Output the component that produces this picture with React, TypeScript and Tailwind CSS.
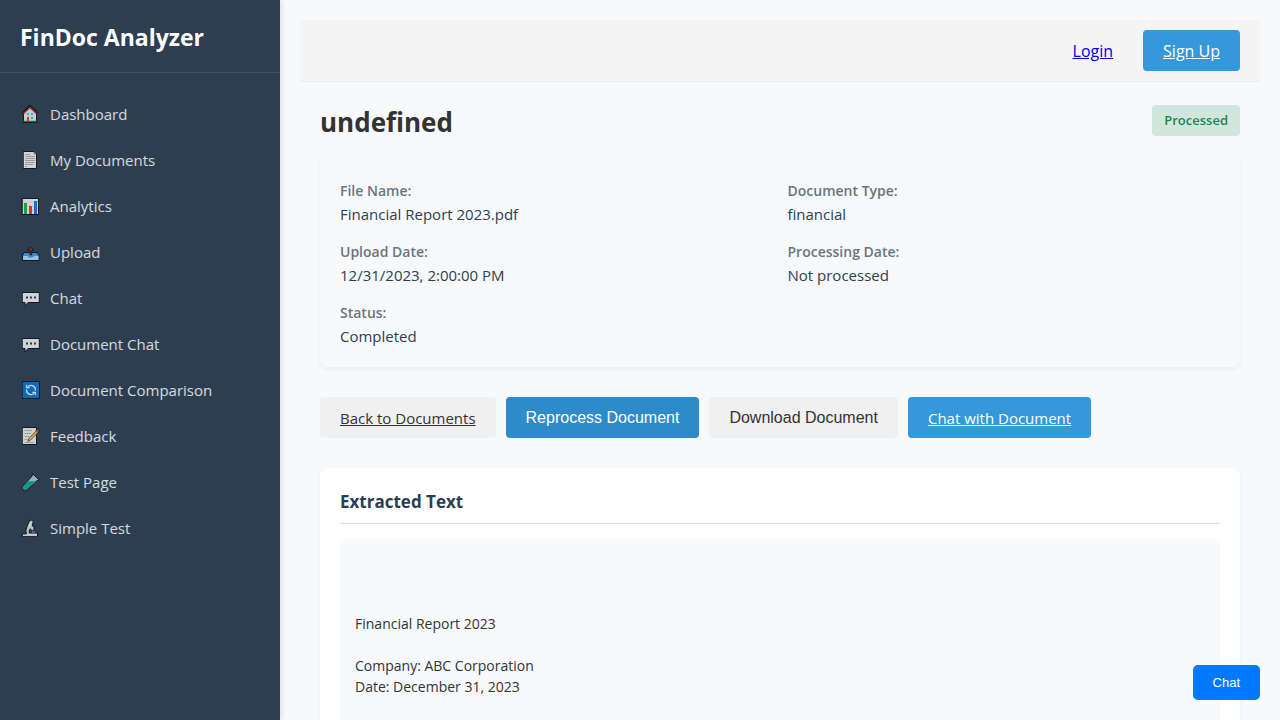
import type { ReactNode } from 'react';

const outline = { stroke: '#101418', strokeWidth: 1, strokeLinejoin: 'round' as const, strokeLinecap: 'round' as const };

function Glyph({ children }: { children: ReactNode }) {
  return (
    <svg viewBox="0 0 20 20" className="h-5 w-5 shrink-0 opacity-90" aria-hidden="true">
      {children}
    </svg>
  );
}

const house = (
  <Glyph>
    <path d="M3.5 9.5V17.5H16.5V9.5L10 3Z" fill="#d9dce0" {...outline} />
    <path d="M2.5 18.2H17.5" stroke="#101418" strokeWidth="1.4" />
    <path d="M3.5 17.2H16.5" stroke="#2fa84a" strokeWidth="1" />
    <path d="M2.5 9.5L10 2.5L17.5 9.5" fill="none" stroke="#101418" strokeWidth="2.4" />
    <path d="M3.4 9.6L10 3.4L16.6 9.6" fill="none" stroke="#d6402e" strokeWidth="1.1" />
    <rect x="7" y="9" width="2" height="2" fill="#35b5e8" />
    <rect x="11" y="9" width="2" height="2" fill="#35b5e8" />
    <rect x="11" y="13" width="2" height="2" fill="#35b5e8" />
    <rect x="7" y="13" width="2" height="4" fill="#d6402e" />
  </Glyph>
);

const page = (
  <Glyph>
    <path d="M3.5 1.5H14L16.5 4V18.5H3.5Z" fill="#e1e3e6" {...outline} />
    <path d="M14 1.8V4H16.2" fill="none" stroke="#767b82" strokeWidth="0.8" />
    <path d="M5.2 4.5H10M5.2 6.5H14.8M5.2 8.5H14.8M5.2 10.5H14.8M5.2 12.5H14.8M5.2 14.5H13M5.2 16.5H7" stroke="#92979d" strokeWidth="0.8" />
  </Glyph>
);

const barChart = (
  <Glyph>
    <rect x="2.5" y="2.5" width="16" height="16" fill="#e4e6e9" {...outline} />
    <path d="M3 6H18M3 10H18M3 14H18" stroke="#c5c8cc" strokeWidth="0.6" />
    <rect x="4" y="7" width="3" height="11" fill="#25a83c" />
    <rect x="9" y="10" width="3" height="8" fill="#dc3c2b" />
    <rect x="14" y="5" width="3" height="13" fill="#1b72c4" />
  </Glyph>
);

const outbox = (
  <Glyph>
    <path d="M4.5 10.5H17L19 13.5V18.5H2.5V13.5Z" fill="#3f94d1" {...outline} />
    <path d="M3 14H7.5Q8 15.7 10.8 15.7Q13.6 15.7 14 14H18.5V18H3Z" fill="#a5d2ef" />
    <path d="M10.8 5.3L14 8.3H11.7V12.8H9.9V8.3H7.6Z" fill="#a8242d" {...outline} strokeWidth={0.9} />
  </Glyph>
);

const speech = (
  <Glyph>
    <path d="M2.5 4.5H19.3V14.5H8L5 18V14.5H2.5Z" fill="#e1e3e6" {...outline} />
    <path d="M6 8.5H8V10.5H6ZM10 8.5H12V10.5H10ZM14 8.5H16V10.5H14Z" fill="#353a40" />
  </Glyph>
);

const refresh = (
  <Glyph>
    <rect x="2.5" y="1.5" width="17" height="17" fill="#0b70c8" {...outline} />
    <path d="M7.7 6.8A4.5 4.5 0 0 1 15.4 10.5M14.3 13.2A4.5 4.5 0 0 1 6.6 9.5" fill="none" stroke="#d7e7f5" strokeWidth="1.2" />
    <path d="M6.6 4.8V7.6H9.6M15.4 15.2V12.4H12.4" fill="none" stroke="#d7e7f5" strokeWidth="1.1" />
  </Glyph>
);

const memo = (
  <Glyph>
    <path d="M2.5 1.5H16.5V18.5H2.5Z" fill="#dfe1e3" {...outline} />
    <path d="M4.5 4.5H12M4.5 7.5H11M4.5 10.5H9M4.5 13.5H7.5M4.5 16.5H14" stroke="#959a9f" strokeWidth="0.8" />
    <path d="M8 15L9 12.2L17.3 3.8L19.2 5.4L10.6 14Z" fill="#f1b83f" {...outline} strokeWidth={0.6} />
    <path d="M16 4.8L17.4 3.3L19.4 5L17.9 6.6Z" fill="#bf4e50" {...outline} strokeWidth={0.5} />
  </Glyph>
);

const testTube = (
  <Glyph>
    <path d="M12.5 1.8L19.2 7.8L17 8.7L7.7 17.3Q5.2 19.4 3.2 17.6Q1.6 15.6 3.5 13.4L12 4.2Z" fill="#9bbfd7" {...outline} />
    <path d="M8 9.3H15.5L7.2 16.9Q5.2 18.4 3.8 17Q2.6 15.4 4 13.7Z" fill="#13a184" />
  </Glyph>
);

const microscope = (
  <Glyph>
    <path d="M2.5 16H6.3Q5.2 12 7 8.4L9.3 3.3L11.8 2L13.3 3.2L12.2 8H14V12.5H11.5L10.3 10.7Q8.5 13 9.3 15H17.5V18.2H2.5Z" fill="#cbd1d6" {...outline} />
    <path d="M3 17.3H17M10.5 4L9.8 8.3" stroke="#f0f2f4" strokeWidth="0.9" />
    <path d="M12 12.8H15V14.7H12Z" fill="#687781" />
  </Glyph>
);

const navItems: { label: string; icon: ReactNode }[] = [
  { label: 'Dashboard', icon: house },
  { label: 'My Documents', icon: page },
  { label: 'Analytics', icon: barChart },
  { label: 'Upload', icon: outbox },
  { label: 'Chat', icon: speech },
  { label: 'Document Chat', icon: speech },
  { label: 'Document Comparison', icon: refresh },
  { label: 'Feedback', icon: memo },
  { label: 'Test Page', icon: testTube },
  { label: 'Simple Test', icon: microscope },
];

const details = [
  ['File Name:', 'Financial Report 2023.pdf'],
  ['Document Type:', 'financial'],
  ['Upload Date:', '12/31/2023, 2:00:00 PM'],
  ['Processing Date:', 'Not processed'],
  ['Status:', 'Completed'],
];

const extractedText = `

Financial Report 2023

Company: ABC Corporation
Date: December 31, 2023
`;

export default function App() {
  return (
    <div className="flex h-screen overflow-hidden bg-[#f8f9fb] font-['Open_Sans',sans-serif] text-[15px] leading-6 text-[#333]">
      <aside className="z-10 w-[280px] shrink-0 bg-[#2c3e50] text-white shadow-[2px_0_5px_rgba(0,0,0,0.1)]">
        <div className="border-b border-white/10 px-5 pt-5 pb-[18px]">
          <h2 className="text-[23px] leading-[34px] font-bold">FinDoc Analyzer</h2>
        </div>
        <nav className="pt-[18px]">
          <ul>
            {navItems.map(({ label, icon }) => (
              <li key={label}>
                <a href="#" className="flex items-center gap-[10px] px-5 py-[11px] text-white/80">
                  {icon}
                  <span>{label}</span>
                </a>
              </li>
            ))}
          </ul>
        </nav>
      </aside>

      <main className="min-w-0 flex-1 overflow-hidden p-5">
        <header className="flex items-center justify-end gap-[30px] border-b border-[#e9ecef] bg-[#f4f4f4] px-5 py-[10px] text-base">
          <a href="#" className="text-[#0000ee] underline">Login</a>
          <a href="#" className="flex h-[41px] items-center rounded bg-[#3498db] px-5 text-white underline">Sign Up</a>
        </header>

        <div className="px-5">
          <div className="flex items-start justify-between pt-[23px] pb-[18px]">
            <h1 className="text-[26px] leading-[34px] font-bold">undefined</h1>
            <span className="rounded bg-[#d1e7dd] px-3 py-[5px] text-[13px] leading-[21px] font-semibold text-[#198754]">Processed</span>
          </div>

          <dl className="grid grid-cols-2 gap-x-[15px] gap-y-[13px] rounded-lg p-5 shadow-[0_2px_4px_rgba(0,0,0,0.05)]">
            {details.map(([label, value]) => (
              <div key={label}>
                <dt className="text-[14px] leading-[27px] font-semibold text-[#6c757d]">{label}</dt>
                <dd className="leading-[21px] text-[#2c3e50]">{value}</dd>
              </div>
            ))}
          </dl>

          <div className="mt-[30px] flex flex-wrap gap-[10px]">
            <a href="#" className="flex h-[41px] items-center rounded bg-[#f0f0f0] px-5 underline">Back to Documents</a>
            <button type="button" className="h-[41px] rounded bg-[#2e8bcb] px-5 font-['Liberation_Sans',sans-serif] text-base text-white">Reprocess Document</button>
            <button type="button" className="h-[41px] rounded bg-[#f0f0f0] px-5 font-['Liberation_Sans',sans-serif] text-base">Download Document</button>
            <a href="#" className="flex h-[41px] items-center rounded bg-[#3498db] px-5 text-white underline">Chat with Document</a>
          </div>

          <section className="mt-[30px] rounded-lg bg-white p-5 shadow-[0_2px_4px_rgba(0,0,0,0.05)]">
            <h2 className="border-b border-[#dee2e6] pb-2 text-[17px] leading-[27px] font-bold text-[#2c3e50]">Extracted Text</h2>
            <div className="mt-[15px] rounded-lg bg-[#f8f9fb] px-[15px] py-4">
              <pre className="min-h-40 pt-4 font-['Open_Sans',sans-serif] text-[14px] leading-[21px]">{extractedText}</pre>
            </div>
          </section>
        </div>
      </main>

      <button type="button" className="fixed right-5 bottom-5 z-20 h-[35px] rounded-[5px] bg-[#007bff] px-5 font-['Liberation_Sans',sans-serif] text-[13px] text-white">Chat</button>
    </div>
  );
}
